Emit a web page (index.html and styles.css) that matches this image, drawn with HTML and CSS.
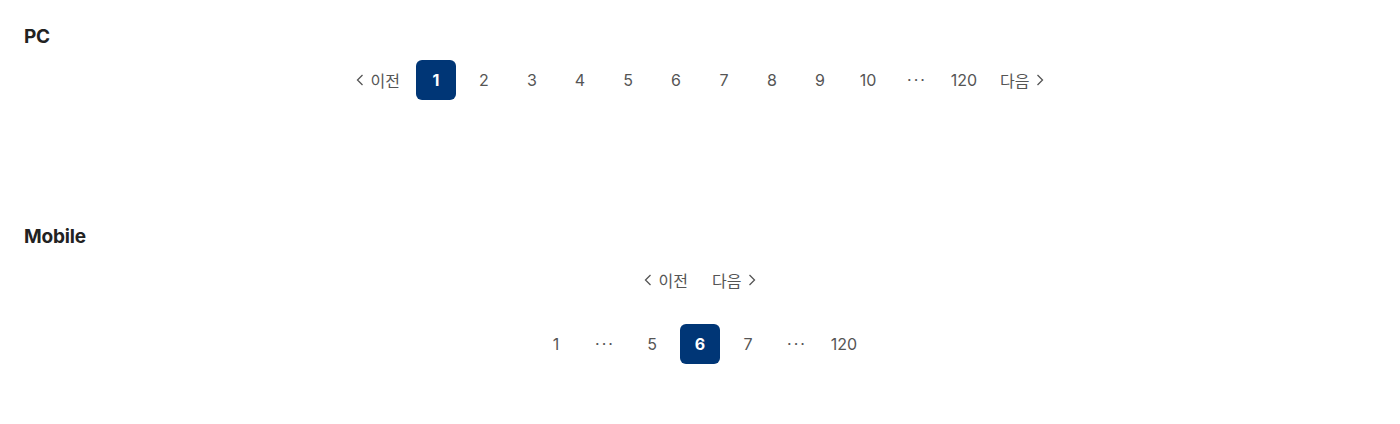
FILE: index.html
```html
<!DOCTYPE html>
<html lang="ko">
<head>
<meta charset="utf-8">
<link rel="stylesheet" href="styles.css">
</head>
<body>
<section class="section">
  <h2 class="title">PC</h2>
  <nav class="pager">
    <a class="nav-btn nav-prev"><svg class="chev" viewBox="0 0 16 16" width="16" height="16"><path d="M10.5 3 L5.5 8 L10.5 13" fill="none" stroke="#555" stroke-width="1.3"/></svg><span>이전</span></a>
    <a class="page active">1</a>
    <a class="page">2</a>
    <a class="page">3</a>
    <a class="page">4</a>
    <a class="page">5</a>
    <a class="page">6</a>
    <a class="page">7</a>
    <a class="page">8</a>
    <a class="page">9</a>
    <a class="page">10</a>
    <span class="page dots">···</span>
    <a class="page">120</a>
    <a class="nav-btn nav-next"><span>다음</span><svg class="chev" viewBox="0 0 16 16" width="16" height="16"><path d="M5.5 3 L10.5 8 L5.5 13" fill="none" stroke="#555" stroke-width="1.3"/></svg></a>
  </nav>
</section>
<section class="section mobile">
  <h2 class="title">Mobile</h2>
  <nav class="pager-nav">
    <a class="nav-btn"><svg class="chev" viewBox="0 0 16 16" width="16" height="16"><path d="M10.5 3 L5.5 8 L10.5 13" fill="none" stroke="#555" stroke-width="1.3"/></svg><span>이전</span></a>
    <a class="nav-btn"><span>다음</span><svg class="chev" viewBox="0 0 16 16" width="16" height="16"><path d="M5.5 3 L10.5 8 L5.5 13" fill="none" stroke="#555" stroke-width="1.3"/></svg></a>
  </nav>
  <nav class="pager pager-m">
    <a class="page">1</a>
    <span class="page dots">···</span>
    <a class="page">5</a>
    <a class="page active">6</a>
    <a class="page">7</a>
    <span class="page dots">···</span>
    <a class="page">120</a>
  </nav>
</section>
</body>
</html>
```

FILE: styles.css
```css
* { box-sizing: border-box; }
html, body { margin: 0; background: #fff; }
body {
  padding: 25px 24px 0;
  font-family: Inter, "Noto Sans CJK KR", sans-serif;
  color: #555;
}
.title {
  margin: 0 0 11px;
  font-size: 19px;
  line-height: 24px;
  font-weight: 700;
  color: #222;
  letter-spacing: -0.2px;
}
.mobile { margin-top: 125px; }
.pager {
  display: flex;
  justify-content: center;
  align-items: center;
  gap: 8px;
}
.page {
  width: 40px;
  height: 40px;
  display: flex;
  align-items: center;
  justify-content: center;
  font-size: 16px;
  color: #555;
  border-radius: 6px;
  text-decoration: none;
}
.page.active {
  background: #003676;
  color: #fff;
  font-weight: 700;
}
.dots { letter-spacing: 2px; font-size: 16px; padding-left: 2px; }
.nav-btn {
  display: flex;
  align-items: center;
  gap: 3px;
  height: 40px;
  font-size: 16px;
  color: #555;
  font-family: "Noto Sans CJK KR", sans-serif;
}
.nav-prev { margin-right: 8px; }
.nav-next { margin-left: 8px; }
.chev { display: block; flex: none; }
.pager-nav {
  display: flex;
  justify-content: center;
  gap: 24px;
  margin-bottom: 24px;
}
```
